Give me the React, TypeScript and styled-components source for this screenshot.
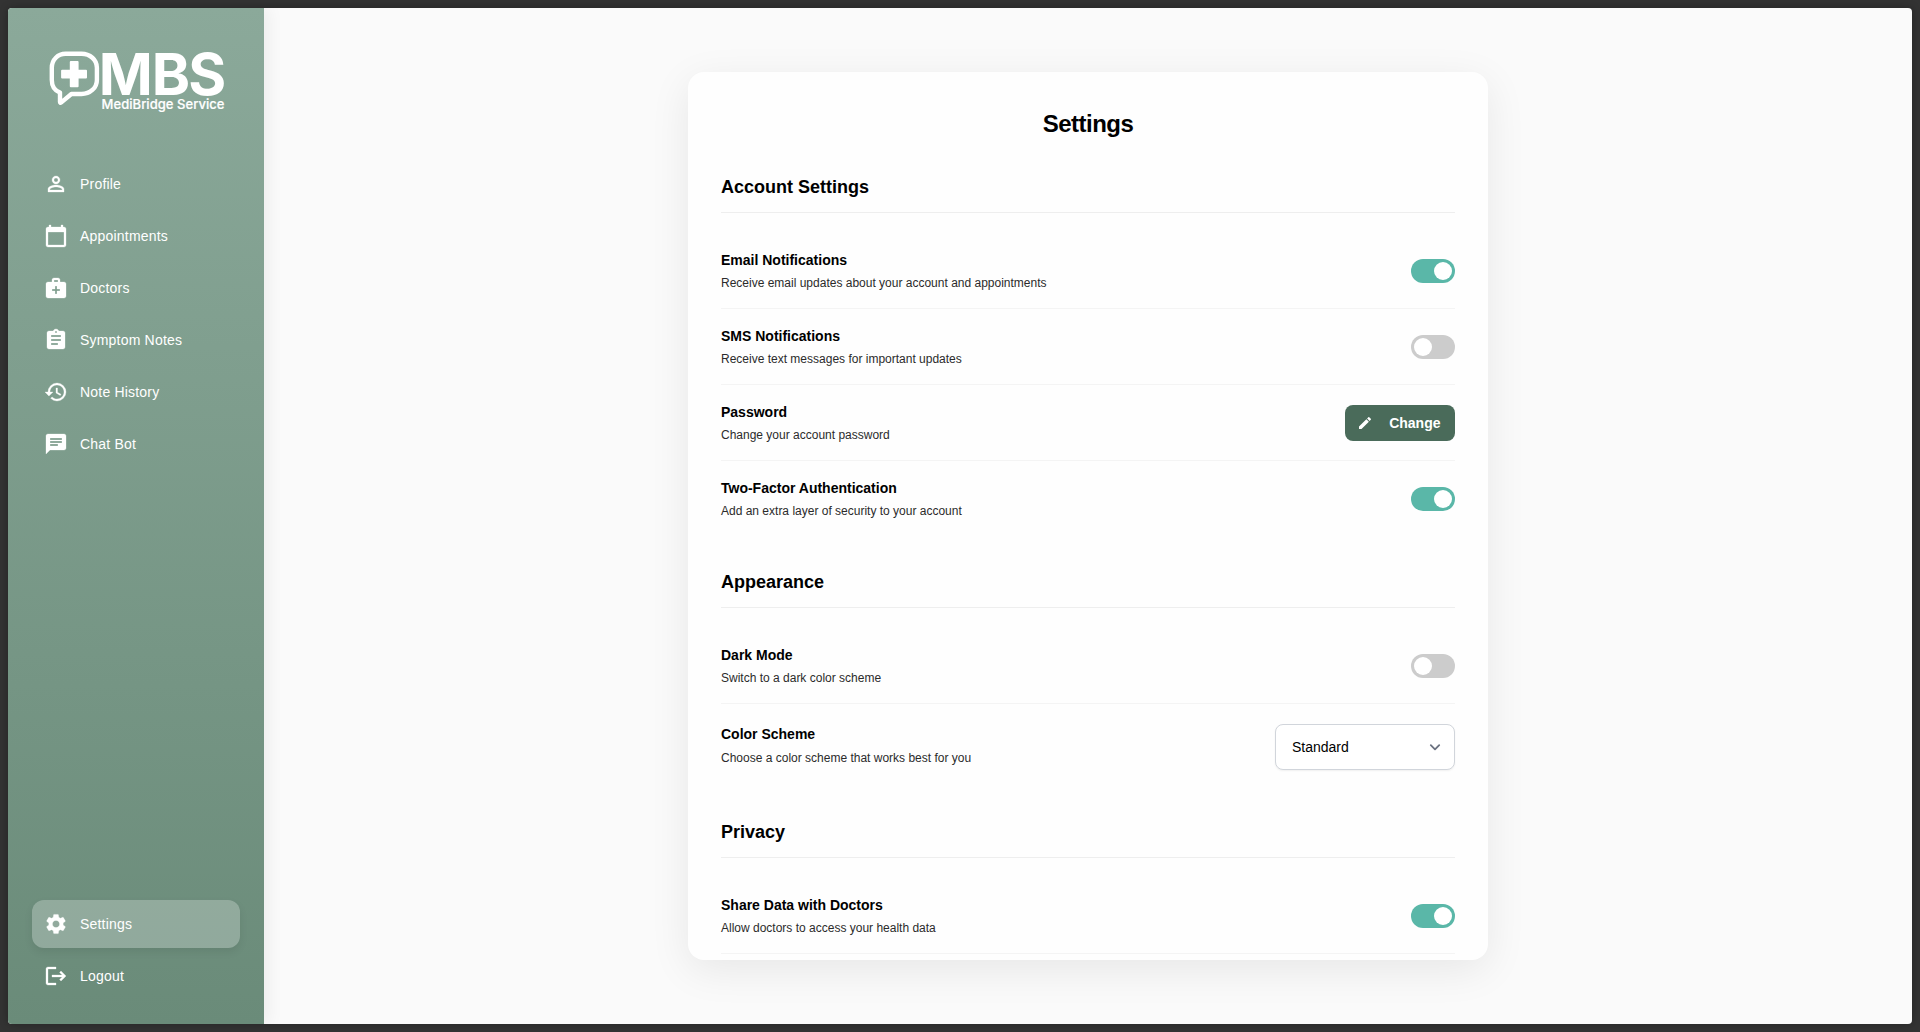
import React, { useState } from "react";
import styled, { createGlobalStyle } from "styled-components";
import {
  MdPersonOutline,
  MdCalendarToday,
  MdMedicalServices,
  MdAssignment,
  MdHistory,
  MdChat,
  MdSettings,
  MdLogout,
  MdEdit,
} from "react-icons/md";

const GlobalStyle = createGlobalStyle`
  *, *::before, *::after { box-sizing: border-box; }
  html, body, #root { height: 100%; }
  body {
    margin: 0;
    background: #333333;
    font-family: "Liberation Sans", Arial, sans-serif;
    overflow: hidden;
  }
`;

const Frame = styled.div`
  height: 100%;
  padding: 8px;
`;

const Window = styled.div`
  display: flex;
  height: 100%;
  border-radius: 4px;
  overflow: hidden;
  background: #fafafa;
  box-shadow: 0 0 8px rgba(0, 0, 0, 0.3);
`;

const Sidebar = styled.aside`
  position: relative;
  z-index: 1;
  flex: 0 0 256px;
  min-width: 0;
  display: flex;
  flex-direction: column;
  padding: 24px;
  background: linear-gradient(180deg, #8ba99a 0%, #6a8b79 100%);
  box-shadow: 4px 0 16px rgba(0, 0, 0, 0.06);
`;

const Brand = styled.div`
  height: 128px;
  padding: 0 14px;
`;

const LogoMark = styled.svg`
  display: block;
  overflow: visible;
`;

const Nav = styled.nav`
  display: flex;
  flex-direction: column;
  gap: 4px;
`;

const BottomNav = styled(Nav)`
  margin-top: auto;
`;

const NavItem = styled.a<{ $active?: boolean }>`
  display: flex;
  align-items: center;
  gap: 12px;
  height: 48px;
  padding: 0 12px;
  border-radius: 12px;
  color: #ffffff;
  font-size: 14px;
  letter-spacing: 0.2px;
  background: ${(p) => (p.$active ? "rgba(255, 255, 255, 0.25)" : "transparent")};
  box-shadow: ${(p) => (p.$active ? "0 4px 8px rgba(0, 0, 0, 0.08)" : "none")};

  svg {
    flex: none;
    width: 24px;
    height: 24px;
    stroke-width: 0.3px;
  }

  svg [fill="none"] {
    stroke: none;
  }
`;

const Main = styled.main`
  flex: 1;
  display: flex;
  justify-content: center;
  padding: 64px 0;
`;

const Card = styled.section`
  width: 800px;
  height: 888px;
  padding: 38px 33px 0;
  border-radius: 16px;
  background: #fefefe;
  box-shadow: 0 10px 40px rgba(0, 0, 0, 0.08);
  overflow: hidden;
`;

const Title = styled.h1`
  margin: 0 0 38px;
  font-size: 24px;
  line-height: 28px;
  letter-spacing: -0.5px;
  text-align: center;
  color: #000000;
`;

const Group = styled.div<{ $after?: number }>`
  margin-bottom: ${(p) => p.$after ?? 35}px;
`;

const GroupTitle = styled.h2`
  margin: 0 0 20px;
  padding-bottom: 14px;
  border-bottom: 1px solid #eeeeee;
  font-size: 18px;
  line-height: 22px;
  color: #000000;
`;

const RowText = styled.div`
  display: flex;
  flex-direction: column;
  gap: 8px;
`;

const Row = styled.div<{ $last?: boolean; $tall?: boolean }>`
  display: flex;
  align-items: center;
  justify-content: space-between;
  padding: ${(p) => (p.$tall ? "20px 0" : "19px 0 18px")};
  border-bottom: ${(p) => (p.$last ? "none" : "1px solid #f4f4f4")};

  ${RowText} {
    gap: ${(p) => (p.$tall ? 9 : 8)}px;
    padding-bottom: ${(p) => (p.$tall ? 3 : 0)}px;
  }
`;

const RowTitle = styled.div`
  font-size: 14px;
  line-height: 16px;
  font-weight: 700;
  color: #000000;
`;

const RowHint = styled.div`
  font-size: 12px;
  line-height: 14px;
  color: #2b2b2b;
`;

const Switch = styled.button<{ $on: boolean }>`
  display: flex;
  align-items: center;
  justify-content: ${(p) => (p.$on ? "flex-end" : "flex-start")};
  width: 44px;
  height: 24px;
  padding: 3px;
  border: 0;
  border-radius: 12px;
  background: ${(p) => (p.$on ? "#5ab7a8" : "#cccccc")};
`;

const Knob = styled.span`
  width: 18px;
  height: 18px;
  border-radius: 50%;
  background: #ffffff;
`;

const ChangeButton = styled.button`
  display: flex;
  align-items: center;
  justify-content: space-between;
  width: 110px;
  height: 36px;
  margin: 0;
  padding: 0 14.5px 0 12px;
  border: 0;
  border-radius: 8px;
  background: #4a6b5a;
  color: #ffffff;
  font: 700 14px "Liberation Sans", Arial, sans-serif;

  svg {
    width: 16px;
    height: 16px;
  }
`;

const SelectBox = styled.div`
  display: flex;
  align-items: center;
  justify-content: space-between;
  width: 180px;
  height: 46px;
  padding: 0 10.6px 0 16px;
  border: 1px solid #d1d5db;
  border-radius: 8px;
  background: #ffffff;
  box-shadow: 0 1px 2px rgba(0, 0, 0, 0.06);
  font-size: 14px;
  color: #000000;
`;

function Logo() {
  return (
    <LogoMark width="180" height="80" viewBox="46 32 180 80" fill="none">
      <path
        d="M65.5 53.8H81.5C90 53.8 96.9 59.7 96.9 67.8V79.9C96.9 88 90 94 81.5 94H71.4L61 102.6C60.5 103 60 102.7 60 102.1V92.6C55 90.6 51.8 85.8 51.8 79.9V67.8C51.8 59.7 58 53.8 65.5 53.8Z"
        stroke="#ffffff"
        strokeWidth="4.4"
        strokeLinejoin="round"
      />
      <path
        d="M70.8 61H77.6Q78.6 61 78.6 62V69.7H86Q87 69.7 87 70.7V77.5Q87 78.5 86 78.5H78.6V86.2Q78.6 87.2 77.6 87.2H70.8Q69.8 87.2 69.8 86.2V78.5H62.1Q61.1 78.5 61.1 77.5V70.7Q61.1 69.7 62.1 69.7H69.8V62Q69.8 61 70.8 61Z"
        fill="#ffffff"
      />
      <text
        x="98.8 151.8 188.3"
        y="95"
        fill="#ffffff"
        fontFamily="Inter, sans-serif"
        fontWeight="700"
        fontSize="58"
      >
        MBS
      </text>
      <text
        x="101.6"
        y="108.6"
        fill="#ffffff"
        fontFamily="Inter, sans-serif"
        fontWeight="500"
        fontSize="13"
        stroke="#ffffff"
        strokeWidth="0.2"
        textLength="122.8"
      >
        MediBridge Service
      </text>
    </LogoMark>
  );
}

function Toggle({ initial = false, label }: { initial?: boolean; label: string }) {
  const [on, setOn] = useState(initial);
  return (
    <Switch $on={on} role="switch" aria-checked={on} aria-label={label} onClick={() => setOn(!on)}>
      <Knob />
    </Switch>
  );
}

function Setting({
  title,
  hint,
  last,
  tall,
  children,
}: {
  title: string;
  hint: string;
  last?: boolean;
  tall?: boolean;
  children: React.ReactNode;
}) {
  return (
    <Row $last={last} $tall={tall}>
      <RowText>
        <RowTitle>{title}</RowTitle>
        <RowHint>{hint}</RowHint>
      </RowText>
      {children}
    </Row>
  );
}

const links = [
  { label: "Profile", Icon: MdPersonOutline },
  { label: "Appointments", Icon: MdCalendarToday },
  { label: "Doctors", Icon: MdMedicalServices },
  { label: "Symptom Notes", Icon: MdAssignment },
  { label: "Note History", Icon: MdHistory },
  { label: "Chat Bot", Icon: MdChat },
];

export default function App() {
  return (
    <Frame>
      <GlobalStyle />
      <Window>
        <Sidebar>
          <Brand>
            <Logo />
          </Brand>
          <Nav>
            {links.map(({ label, Icon }) => (
              <NavItem key={label}>
                <Icon />
                {label}
              </NavItem>
            ))}
          </Nav>
          <BottomNav>
            <NavItem $active>
              <MdSettings />
              Settings
            </NavItem>
            <NavItem>
              <MdLogout />
              Logout
            </NavItem>
          </BottomNav>
        </Sidebar>
        <Main>
          <Card>
            <Title>Settings</Title>
            <Group>
              <GroupTitle>Account Settings</GroupTitle>
              <Setting title="Email Notifications" hint="Receive email updates about your account and appointments">
                <Toggle initial label="Email Notifications" />
              </Setting>
              <Setting title="SMS Notifications" hint="Receive text messages for important updates">
                <Toggle label="SMS Notifications" />
              </Setting>
              <Setting title="Password" hint="Change your account password">
                <ChangeButton>
                  <MdEdit />
                  Change
                </ChangeButton>
              </Setting>
              <Setting title="Two-Factor Authentication" hint="Add an extra layer of security to your account" last>
                <Toggle initial label="Two-Factor Authentication" />
              </Setting>
            </Group>
            <Group $after={31}>
              <GroupTitle>Appearance</GroupTitle>
              <Setting title="Dark Mode" hint="Switch to a dark color scheme">
                <Toggle label="Dark Mode" />
              </Setting>
              <Setting title="Color Scheme" hint="Choose a color scheme that works best for you" last tall>
                <SelectBox>
                  Standard
                  <svg width="16" height="16" viewBox="0 0 16 16" fill="none">
                    <path
                      d="M3.8 6.2L8 10.4L12.2 6.2"
                      stroke="#6b7280"
                      strokeWidth="1.8"
                      strokeLinecap="round"
                      strokeLinejoin="round"
                    />
                  </svg>
                </SelectBox>
              </Setting>
            </Group>
            <Group>
              <GroupTitle>Privacy</GroupTitle>
              <Setting title="Share Data with Doctors" hint="Allow doctors to access your health data">
                <Toggle initial label="Share Data with Doctors" />
              </Setting>
            </Group>
          </Card>
        </Main>
      </Window>
    </Frame>
  );
}
